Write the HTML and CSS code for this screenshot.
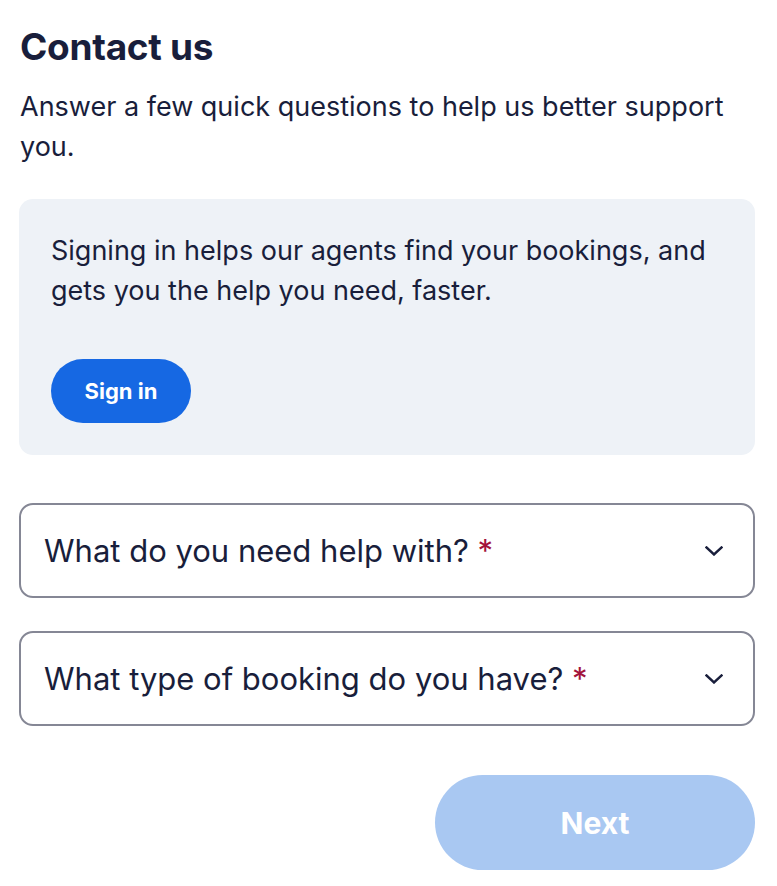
FILE: index.html
```html
<!DOCTYPE html>
<html lang="en">
<head>
<meta charset="utf-8">
<title>Contact us</title>
<link rel="stylesheet" href="styles.css">
</head>
<body>
<main class="page">
  <h1 class="title">Contact us</h1>
  <p class="intro">Answer a few quick questions to help us better support you.</p>

  <section class="signin-card">
    <p class="signin-text">Signing in helps our agents find your bookings, and gets you the help you need, faster.</p>
    <button class="btn-signin" type="button">Sign in</button>
  </section>

  <div class="field">
    <span class="field-label">What do you need help with? <span class="req">*</span></span>
    <svg class="chevron" width="18" height="10" viewBox="0 0 18 10" aria-hidden="true"><path d="M1.5 1.5 L9 8.5 L16.5 1.5" fill="none" stroke="#191e3b" stroke-width="2.4" stroke-linecap="square"/></svg>
  </div>

  <div class="field">
    <span class="field-label">What type of booking do you have? <span class="req">*</span></span>
    <svg class="chevron" width="18" height="10" viewBox="0 0 18 10" aria-hidden="true"><path d="M1.5 1.5 L9 8.5 L16.5 1.5" fill="none" stroke="#191e3b" stroke-width="2.4" stroke-linecap="square"/></svg>
  </div>

  <div class="actions">
    <button class="btn-next" type="button" disabled>Next</button>
  </div>
</main>
</body>
</html>
```

FILE: styles.css
```css
* { box-sizing: border-box; }

html, body {
  margin: 0;
  padding: 0;
  background: #ffffff;
}

body {
  font-family: Inter, "Noto Sans", sans-serif;
  color: #191e3b;
}

.page {
  width: 736px;
  margin-left: 19px;
  display: flex;
  flex-direction: column;
}

.title {
  margin: 23px 0 0 1px;
  font-size: 37px;
  line-height: 48px;
  font-weight: 700;
  letter-spacing: -0.3px;
}

.intro {
  margin: 16px 0 0 1px;
  font-size: 27px;
  line-height: 40px;
}

.signin-card {
  margin-top: 32px;
  background: #eef2f7;
  border-radius: 14px;
  padding: 32px 32px 32px 32px;
  display: flex;
  flex-direction: column;
  align-items: flex-start;
}

.signin-text {
  margin: 0;
  font-size: 27px;
  line-height: 40px;
}

.btn-signin {
  margin-top: 48px;
  width: 140px;
  height: 64px;
  border: none;
  border-radius: 32px;
  background: #1668e3;
  color: #ffffff;
  font-family: inherit;
  font-size: 22px;
  font-weight: 700;
  cursor: pointer;
}

.field {
  margin-top: 48px;
  height: 95px;
  border: 2px solid #858795;
  border-radius: 14px;
  padding: 0 30px 0 23px;
  display: flex;
  align-items: center;
  justify-content: space-between;
}

.field + .field {
  margin-top: 33px;
}

.field-label {
  font-size: 31px;
  line-height: 40px;
}

.req {
  color: #a3133b;
}

.chevron {
  display: block;
}

.actions {
  margin-top: 49px;
  display: flex;
  justify-content: flex-end;
}

.btn-next {
  width: 320px;
  height: 95px;
  border: none;
  border-radius: 48px;
  background: #a9c8f2;
  color: #ffffff;
  font-family: inherit;
  font-size: 30px;
  font-weight: 700;
}
```
